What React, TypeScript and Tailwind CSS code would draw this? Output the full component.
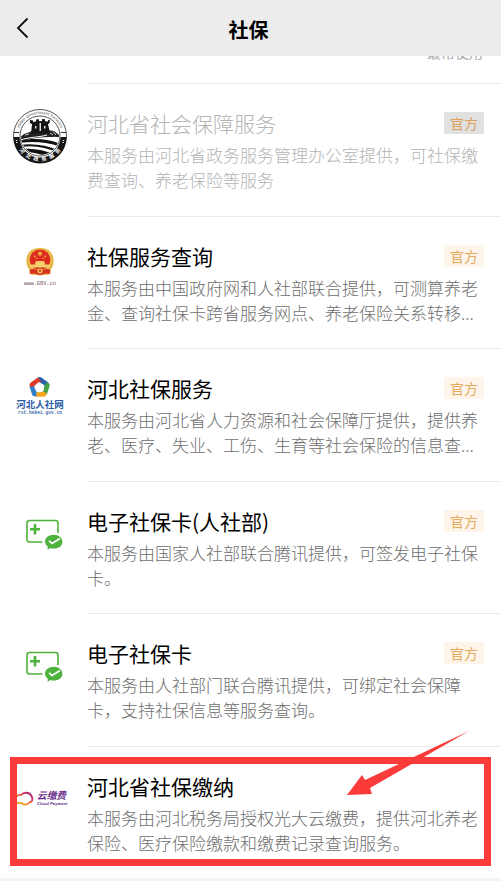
import type { ReactNode } from "react";

const RIBBONS = [
  { angle: 0, color: "#2a5fb0" },
  { angle: 72, color: "#43a047" },
  { angle: 144, color: "#f5a623" },
  { angle: 216, color: "#2f7fcb" },
  { angle: 288, color: "#e03a2c" },
];

const SEAL_LETTERS = [
  { char: "河", angle: 50 },
  { char: "北", angle: 30 },
  { char: "政", angle: 10 },
  { char: "务", angle: -10 },
  { char: "服", angle: -30 },
  { char: "务", angle: -50 },
];

function GreatWallIcon() {
  return (
    <svg viewBox="0 0 60 60" className="size-[60px]" aria-hidden="true">
      <defs>
        <path id="arcTop" d="M8.200 27a22 22 0 0 1 43.600 0" />
        <clipPath id="disc">
          <circle cx="30" cy="30" r="19" />
        </clipPath>
      </defs>
      <circle cx="30" cy="30" r="26.500" fill="#fff" stroke="#444" strokeWidth="0.900" />
      <path d="M3.500 31h6a20.500 20.500 0 0 0 41 0h6a26.500 26.500 0 0 1-53 0z" fill="#151515" />
      <path d="M3.800 26.500h5.500M50.700 26.500h5.500" stroke="#333" strokeWidth="1" />
      <circle cx="30" cy="30" r="20" fill="#fff" stroke="#444" strokeWidth="0.900" />
      <g clipPath="url(#disc)">
        <path d="M9 32l5-4 6-2 3-2 4 1 10-1 7 1 4 3 5 4-6-1c-12 0-22 0-38 5z" fill="#222" />
        <path d="M21 28l1-10-2-1v-3l3 .5v1.500l3-.5v-2l3-.3v2l3-.2v-2l3 .2v2l3 .3v-1.500l2 .3-.5 3-1.500.7 2 9z" fill="#151515" />
        <path d="M29.500 17h1.500v8h-1.500zM25 20h1.500v2.500H25zM34 20h1.500v2.500H34z" fill="#ddd" />
        <path d="M40 27l3 2M43 25.500l3 3.500M15 29l4-1M44 31l4 1" stroke="#fff" strokeWidth=".8" />
        <path d="M9 35c12-3 27-3 42 3v3c-14-5-28-6-41-4z" fill="#111" />
        <path d="M10 39c12-2 27 0 40 6l-2 2c-12-6-25-8-37-6z" fill="#111" />
        <path d="M12 43c11-1 23 1 33 6l-7 3c-6-4-15-6-24-6z" fill="#111" />
        <path d="M9 34.500c12-4 20-3 28-5.500M16 47.500c6 0 12 1 18 4" fill="none" stroke="#fff" strokeWidth="1" />
      </g>
      <text className="font-['Liberation_Sans']" fontSize="4.200" fill="#555">
        <textPath href="#arcTop" startOffset="50%" textAnchor="middle">
          Hebei Government Services
        </textPath>
      </text>
      {SEAL_LETTERS.map(({ char, angle }) => (
        <text
          key={angle}
          x="30"
          y="55.200"
          textAnchor="middle"
          transform={`rotate(${angle} 30 30)`}
          className="font-['Noto_Sans_CJK_SC']"
          fontSize="5.200"
          fontWeight="700"
          fill="#fff"
        >
          {char}
        </text>
      ))}
      <path d="M6.500 34l.4 3M53.500 34l-.4 3" stroke="#fff" strokeWidth="1.400" strokeDasharray="1 1" />
    </svg>
  );
}

function EmblemIcon() {
  return (
    <svg viewBox="0 0 60 60" className="size-[60px]" aria-hidden="true">
      <path d="M20 31c-4-3-4.700-11-2-16C20 10.500 25 9 30 9s10 1.500 12 6c2.700 5 2 13-2 16l1 3.500-4 1.500H23l-4-1.500z" fill="#e6b84a" />
      <circle cx="30" cy="20.800" r="10.300" fill="#dd2c1f" />
      <path d="M19.500 30.500l4.500-.5 6 2 6-2 4.500.5-1 4.500-4.500-.5-5 2-5-2-4.500.5z" fill="#d8301f" />
      <path d="M30 11.500l.9 2 2.100.200-1.600 1.400.5 2.100-1.900-1.100-1.900 1.100.5-2.100-1.600-1.400 2.100-.2z" fill="#f0b54a" />
      <circle cx="24.800" cy="17.500" r=".9" fill="#f0b54a" />
      <circle cx="35.200" cy="17.500" r=".9" fill="#f0b54a" />
      <circle cx="27" cy="19.500" r=".7" fill="#f0b54a" />
      <circle cx="33" cy="19.500" r=".7" fill="#f0b54a" />
      <path d="M25 23.500l1.500-1.500h7l1.500 1.500-.5 2h5.500l-.8 3H20.800l-.8-3h5.500z" fill="#f6cf6a" />
      <circle cx="30" cy="32" r="2.600" fill="#efbd4f" />
      <circle cx="30" cy="32" r="1.100" fill="#d8301f" />
      <text x="30" y="45.500" textAnchor="middle" className="font-['Liberation_Mono']" fontSize="5.300" fill="#6b4458">
        www.GOV.cn
      </text>
    </svg>
  );
}

function HebeiIcon() {
  return (
    <svg viewBox="0 0 60 60" className="size-[60px]" aria-hidden="true">
      {RIBBONS.map(({ angle, color }) => (
        <path
          key={angle}
          transform={`translate(29.500 16.500) rotate(${angle})`}
          d="M-2.500-9Q0-11.500 2.200-9.800L9-4.800 6 .4 4.600-2.600-.5-5.600z"
          fill={color}
        />
      ))}
      <text x="30" y="37" textAnchor="middle" className="font-['Noto_Sans_CJK_SC']" fontSize="9.500" fontWeight="700" fill="#2a5ca8">
        河北人社网
      </text>
      <text x="30" y="43" textAnchor="middle" className="font-['Liberation_Mono']" fontSize="4.600" fontWeight="700" fill="#3b6db0">
        rst.hebei.gov.cn
      </text>
    </svg>
  );
}

function CardIcon() {
  return (
    <svg viewBox="0 0 60 60" className="size-[60px]" aria-hidden="true">
      <path d="M32.500 38H19.500a2.500 2.500 0 0 1-2.500-2.500V19a2.500 2.500 0 0 1 2.500-2.500h26a2.500 2.500 0 0 1 2.500 2.500v10" fill="none" stroke="#4fb23c" strokeWidth="1.600" />
      <path d="M25 20v10.500M20 25.200h10" stroke="#4fb23c" strokeWidth="2.600" />
      <path d="M43.700 30.800c5 0 8.700 3 8.700 6.900s-3.700 6.900-8.700 6.900c-1.200 0-2.300-.1-3.300-.5L37.600 45.800l.1-3.400c-1.700-1.200-2.700-2.800-2.700-4.700 0-3.900 3.700-6.900 8.700-6.900z" fill="#4fb23c" />
      <path d="M39 36.800l3 2.700 8-5" fill="none" stroke="#fff" strokeWidth="1.700" />
    </svg>
  );
}

function CloudPayIcon() {
  return (
    <svg viewBox="0 0 60 60" className="size-[60px]" aria-hidden="true">
      <defs>
        <linearGradient id="ring" x1="0" y1="1" x2="1" y2="0">
          <stop offset="0" stopColor="#f7b52c" />
          <stop offset=".4" stopColor="#f0902f" />
          <stop offset=".7" stopColor="#d8325f" />
          <stop offset="1" stopColor="#8f2c8a" />
        </linearGradient>
      </defs>
      <path d="M5 30.500c.5-3 3-5 6-4.500 2.500-3 8.500-3.500 10.500 1 2 3.500.5 6-2 6.500-2 2.500-6.500 2.500-8.500.5-3 .5-6-.5-6-3.500z" fill="none" stroke="url(#ring)" strokeWidth="1.900" />
      <text x="27" y="30" className="font-['Noto_Sans_CJK_SC']" fontSize="9.700" fontWeight="700" fontStyle="italic" fill="#6b2d8c">
        云缴费
      </text>
      <text x="27" y="36" className="font-['Liberation_Sans']" fontSize="4.200" fontWeight="700" fontStyle="italic" fill="#6b2d8c">
        Cloud Payment
      </text>
    </svg>
  );
}

type Service = {
  title: string;
  text: string;
  icon: ReactNode;
  official?: boolean;
  muted?: boolean;
  marked?: boolean;
};

const SERVICES: Service[] = [
  {
    title: "河北省社会保障服务",
    text: "本服务由河北省政务服务管理办公室提供，可社保缴费查询、养老保险等服务",
    icon: <GreatWallIcon />,
    official: true,
    muted: true,
  },
  {
    title: "社保服务查询",
    text: "本服务由中国政府网和人社部联合提供，可测算养老金、查询社保卡跨省服务网点、养老保险关系转移...",
    icon: <EmblemIcon />,
    official: true,
  },
  {
    title: "河北社保服务",
    text: "本服务由河北省人力资源和社会保障厅提供，提供养老、医疗、失业、工伤、生育等社会保险的信息查...",
    icon: <HebeiIcon />,
    official: true,
  },
  {
    title: "电子社保卡(人社部)",
    text: "本服务由国家人社部联合腾讯提供，可签发电子社保卡。",
    icon: <CardIcon />,
    official: true,
  },
  {
    title: "电子社保卡",
    text: "本服务由人社部门联合腾讯提供，可绑定社会保障卡，支持社保信息等服务查询。",
    icon: <CardIcon />,
    official: true,
  },
  {
    title: "河北省社保缴纳",
    text: "本服务由河北税务局授权光大云缴费，提供河北养老保险、医疗保险缴款和缴费记录查询服务。",
    icon: <CloudPayIcon />,
    marked: true,
  },
];

function Marker() {
  return (
    <>
      <div className="pointer-events-none absolute inset-x-[10px] top-[11px] bottom-3 border-[7px] border-[#fb3a3a]" />
      <svg viewBox="0 0 124 66" className="pointer-events-none absolute -top-4 right-[31px] h-[66px] w-[124px]" aria-hidden="true">
        <path d="M1 65l15-20 3 5L123 1 24 58l2 6z" fill="#fb3a3a" />
      </svg>
    </>
  );
}

function ServiceRow({ service }: { service: Service }) {
  const { title, text, icon, official, muted, marked } = service;
  return (
    <li className="relative">
      <a href="#" className="flex h-full">
        <span className="w-[87px] shrink-0 pt-[23px] pl-[10px]">{icon}</span>
        <span className="block min-w-0 flex-1 border-t border-[#ebebeb] pt-6 pr-[17px]">
          <span className="flex items-center justify-between">
            <span className={`text-[21px] leading-[30px] ${muted ? "font-light text-[#b4b4b4]" : "text-black"}`}>{title}</span>
            {official && (
              <span
                className={`rounded-xs px-[6px] text-sm leading-[22px] ${
                  muted ? "bg-[#e1e1e1] text-[#dfa05c]" : "bg-[#fef4ea] text-[#e2ab5e]"
                }`}
              >
                官方
              </span>
            )}
          </span>
          <span className={`mt-1 line-clamp-2 text-[17px] leading-[25px] font-light ${muted ? "text-[#b4b4b4]" : "text-[#6e6e6e]"}`}>
            {text}
          </span>
        </span>
      </a>
      {marked && <Marker />}
    </li>
  );
}

export default function App() {
  return (
    <div className="flex min-h-screen flex-col bg-white font-['Noto_Sans_CJK_SC',sans-serif]">
      <header className="grid h-14 grid-cols-[1fr_auto_1fr] items-center bg-[#ececec] pr-5 pl-4">
        <button type="button" aria-label="返回" className="w-4">
          <svg viewBox="0 0 16 22" className="h-[22px] w-4" fill="none" stroke="#111" strokeWidth="1.800" aria-hidden="true">
            <path d="M11.500 1.500L2 11l9.500 9.500" />
          </svg>
        </button>
        <h1 className="pt-1 text-xl font-bold text-black">社保</h1>
      </header>
      <div className="flex h-[27px] justify-end overflow-hidden pr-[18px]">
        <p className="-mt-3 text-sm leading-4 text-[#a8a8a8]">最常使用</p>
      </div>
      <ul className="grid flex-1 auto-rows-fr">
        {SERVICES.map((service) => (
          <ServiceRow key={service.title} service={service} />
        ))}
      </ul>
      <footer className="h-[3px] bg-[#f3f3f5]" />
    </div>
  );
}
